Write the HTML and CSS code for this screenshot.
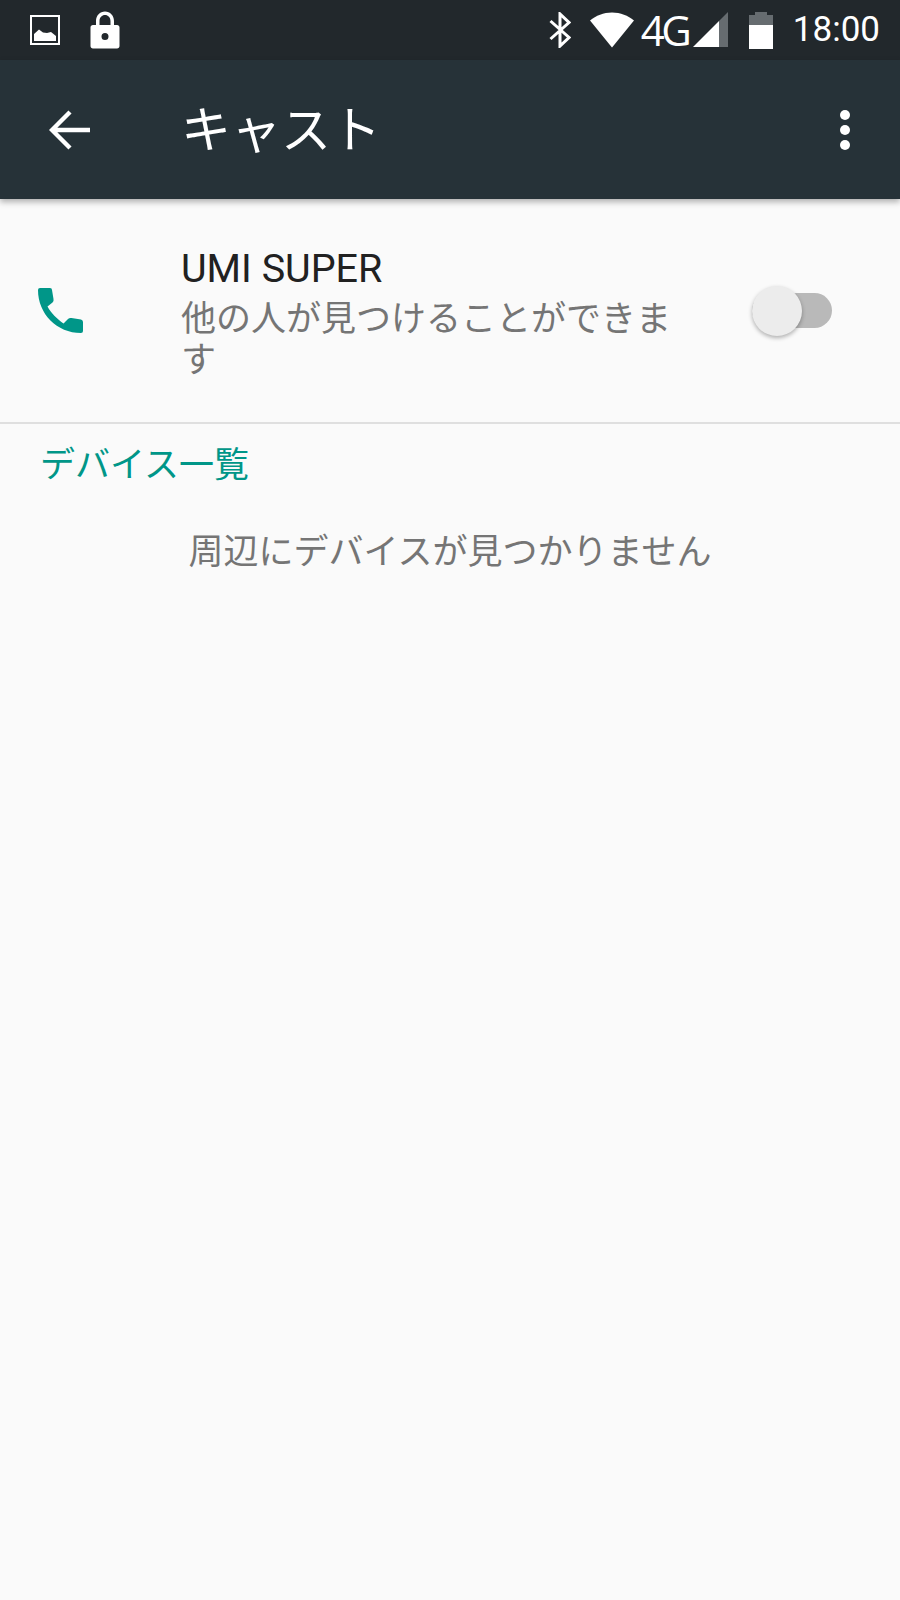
FILE: index.html
```html
<!DOCTYPE html>
<html lang="ja">
<head>
    <meta charset="UTF-8">
    <title>キャスト</title>
    <link rel="stylesheet" href="styles.css">
</head>
<body>

    <!-- Status bar -->
    <div class="status-bar">
        <div class="status-left">
            <svg class="icon-picture" width="30" height="30" viewBox="0 0 30 30">
                <rect x="1" y="1" width="28" height="28" fill="none" stroke="#fff" stroke-width="2"/>
                <path d="M4 26V19L9 14.500L13 17.500L17 18L21 17L26 21V26Z" fill="#fff"/>
            </svg>
            <svg class="icon-lock" width="30" height="38" viewBox="0 0 30 38">
                <path d="M3 14H6V10C6 4.500 10 0.500 15 0.500S24 4.500 24 10V14H27C28.500 14 29.500 15 29.500 16.500V35C29.500 36.500 28.500 37.500 27 37.500H3C1.500 37.500 0.500 36.500 0.500 35V16.500C0.500 15 1.500 14 3 14ZM9.500 14H20.500V10C20.500 6.500 18 4 15 4S9.500 6.500 9.500 10ZM15 22A3.500 3.500 0 1 0 15 29A3.500 3.500 0 1 0 15 22Z" fill="#fff" fill-rule="evenodd"/>
            </svg>
        </div>
        <div class="status-right">
            <svg class="icon-bt" width="22" height="36" viewBox="0 0 22 36">
                <path d="M1.500 9L20 25.500L11 34V2L20 10.500L1.500 27" fill="none" stroke="#fff" stroke-width="3"/>
            </svg>
            <svg class="icon-wifi" width="44" height="36" viewBox="0 0 44 36">
                <path d="M0 8.500C6 3.500 13.500 0.500 22 0.500S38 3.500 44 8.500L22 35.500Z" fill="#fff"/>
            </svg>
            <span class="network">4G</span>
            <svg class="icon-signal" width="36" height="36" viewBox="0 0 36 36">
                <path d="M0 35L26 9V35Z" fill="#fff"/>
                <path d="M26 9L35 0V35H26Z" fill="#666c70"/>
            </svg>
            <svg class="icon-battery" width="24" height="37" viewBox="0 0 24 37">
                <path d="M6 0H18V3H24V13H0V3H6Z" fill="#666c70"/>
                <rect y="13" width="24" height="24" fill="#fff"/>
            </svg>
            <span class="clock">18:00</span>
        </div>
    </div>

    <!-- Toolbar -->
    <div class="toolbar">
        <svg class="icon-back" width="42" height="42" viewBox="0 0 42 42">
            <path d="M41 21H4M21 3L3 21L21 39" fill="none" stroke="#fff" stroke-width="4.400"/>
        </svg>
        <div class="toolbar-title">キャスト</div>
        <div class="menu-dots">
            <span class="dot"></span>
            <span class="dot"></span>
            <span class="dot"></span>
        </div>
    </div>

    <!-- Broadcast row -->
    <div class="device-row">
        <svg class="icon-phone" width="46" height="46" viewBox="0 0 46 46">
            <path d="M2 0H12Q14 0 14 2L15.500 11Q16 13 14.500 14.500L9.500 18.500C13 25 19 31 25.500 35.500L30 31Q31.500 29.500 33.500 30L43 31.500Q45 32 45 34V43Q45 45 43 45C19 45 0 26 0 2Q0 0 2 0Z" fill="#009688"/>
        </svg>
        <div class="device-text">
            <div class="device-name">UMI SUPER</div>
            <div class="device-summary">他の人が見つけることができます</div>
        </div>
        <div class="switch">
            <div class="switch-thumb"></div>
        </div>
    </div>

    <div class="section-title">デバイス一覧</div>
    <div class="empty-message">周辺にデバイスが見つかりません</div>

</body>
</html>
```

FILE: styles.css
```css
body {
    margin: 0;
    height: 1600px;
    overflow: hidden;
    background-color: #fafafa;
    font-family: Roboto, "Noto Sans CJK JP", sans-serif;
}

/* Status bar */
.status-bar {
    height: 60px;
    background-color: #22282c;
    display: flex;
    align-items: center;
    justify-content: space-between;
}

.status-left {
    display: flex;
    align-items: center;
    gap: 30px;
    padding-left: 30px;
}

.status-right {
    display: flex;
    align-items: center;
    padding-right: 20px;
}

.icon-bt {
    margin-right: 19px;
}

.icon-wifi {
    margin-right: 7px;
}

.network {
    color: #fff;
    font-family: "Open Sans", sans-serif;
    font-size: 42px;
    font-weight: 400;
    letter-spacing: -3.500px;
    line-height: 36px;
    width: 52px;
}

.icon-battery {
    margin-left: 20px;
    margin-right: 20px;
}

.clock {
    color: #fff;
    font-size: 35px;
    line-height: 36px;
}

/* Toolbar */
.toolbar {
    height: 139px;
    background-color: #263238;
    display: flex;
    align-items: center;
    box-shadow: 0 3px 6px rgba(0, 0, 0, 0.3);
    padding-left: 49px;
    padding-right: 50px;
}

.toolbar-title {
    color: #fff;
    font-size: 50px;
    margin-left: 90px;
    padding-bottom: 8px;
    flex: 1;
}

.menu-dots {
    display: flex;
    flex-direction: column;
    gap: 5px;
}

.dot {
    display: block;
    width: 10px;
    height: 10px;
    border-radius: 50%;
    background-color: #fff;
}

/* Row */
.device-row {
    height: 223px;
    border-bottom: 2px solid #dfdfdf;
    display: flex;
    align-items: center;
    padding-left: 38px;
}

.icon-phone {
    margin-right: 97px;
}

.device-text {
    width: 500px;
    padding-top: 7px;
}

.device-name {
    color: #212121;
    font-size: 39.500px;
    line-height: 44px;
    margin-bottom: 8px;
}

.device-summary {
    color: #757575;
    font-size: 35px;
    line-height: 41px;
}

.switch {
    width: 80px;
    height: 35px;
    margin-left: 71px;
    border-radius: 18px;
    background-color: #b9b9b9;
    display: flex;
    align-items: center;
}

.switch-thumb {
    width: 50px;
    height: 50px;
    border-radius: 50%;
    background-color: #ececec;
    box-shadow: 0 2px 4px rgba(0, 0, 0, 0.3);
}

/* List */
.section-title {
    color: #009688;
    font-size: 35px;
    margin: 12px 0 0 40px;
}

.empty-message {
    color: #757575;
    font-size: 35px;
    text-align: center;
    margin-top: 36px;
}
```
